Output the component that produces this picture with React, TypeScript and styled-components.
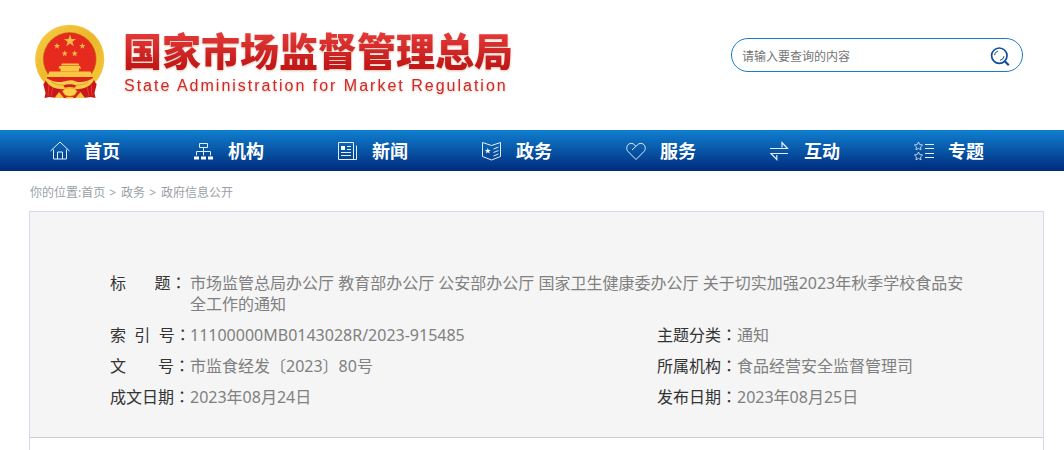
import React from 'react';
import styled, { createGlobalStyle } from 'styled-components';

const GlobalStyle = createGlobalStyle`
  * { box-sizing: border-box; }
  body {
    margin: 0;
    background: #fff;
    font-family: "Noto Sans", "Noto Sans CJK SC", sans-serif;
  }
  a { color: inherit; text-decoration: none; }
`;

const Page = styled.div`
  display: flex;
  flex-direction: column;
  min-height: 100vh;
`;

const Header = styled.header`
  display: flex;
  justify-content: space-between;
  align-items: flex-start;
  height: 130px;
  padding: 24px 41px 0 35px;
`;

const Brand = styled.a`
  display: flex;
  gap: 18px;
`;

const BrandText = styled.div`
  display: flex;
  flex-direction: column;
  gap: 5px;
  padding-top: 4px;
  white-space: nowrap;
  filter: drop-shadow(0 1px 1px rgba(170, 120, 80, 0.45));
`;

const BrandName = styled.h1`
  margin: 0;
  font-family: "Noto Sans CJK SC", sans-serif;
  font-size: 39px;
  line-height: 42px;
  font-weight: 900;
  color: transparent;
  background: linear-gradient(#e43a3a 10%, #c41818 90%);
  background-clip: text;
  -webkit-background-clip: text;
`;

const BrandLatin = styled.p`
  margin: 0;
  padding-left: 1px;
  font-family: "Liberation Sans", Arial, sans-serif;
  font-size: 16px;
  line-height: 22px;
  letter-spacing: 2px;
  color: #d22828;
`;

const SearchForm = styled.form`
  display: flex;
  align-items: center;
  width: 292px;
  height: 34px;
  margin-top: 14px;
  padding: 4px 12px 0 10px;
  border: 1px solid #1a7cc6;
  border-radius: 17px;
`;

const SearchInput = styled.input`
  flex: 1;
  min-width: 0;
  padding: 0;
  border: 0;
  outline: 0;
  background: none;
  font-family: inherit;
  font-size: 12px;
  line-height: 20px;
  color: #333;
  &::placeholder { color: #757575; opacity: 1; }
`;

const SearchButton = styled.button`
  display: flex;
  padding: 0;
  border: 0;
  background: none;
  cursor: pointer;
`;

const Nav = styled.nav`
  display: flex;
  height: 41px;
  padding: 1px 43px 0 13px;
  background: linear-gradient(#107fd0, #002b7c);
`;

const NavItem = styled.a`
  display: flex;
  flex: 1;
  align-items: center;
  justify-content: center;
  gap: 14px;
  color: #fff;
  font-size: 18px;
  line-height: 26px;
  font-weight: 700;
  white-space: nowrap;
`;

const Breadcrumb = styled.nav`
  padding: 13px 30px 9px;
  font-size: 12px;
  line-height: 18px;
  color: #9a9fa8;
`;

const Separator = styled.span`
  margin: 0 5px 0 4px;
`;

const Card = styled.main`
  flex: 1;
  margin: 0 20px 0 29px;
  border: 1px solid #d3daea;
  border-bottom: 0;
`;

const Meta = styled.section`
  padding: 56px 70px 24px 80px;
  border-bottom: 1px solid #cfcfcf;
  background: #f5f5f5;
`;

const MetaTable = styled.table`
  width: 100%;
  table-layout: fixed;
  border-collapse: collapse;
  font-size: 16px;
  line-height: 21px;
`;

const Col = styled.col<{ $width?: string }>`
  width: ${(p) => p.$width ?? 'auto'};
`;

const Label = styled.th`
  padding: 5px 0;
  font-weight: 400;
  text-align: left;
  vertical-align: top;
  white-space: pre;
  color: #333;
`;

/* The TC face centres the full-width colon in its box. */
const Colon = styled.span`
  font-family: "Noto Sans CJK TC", sans-serif;
  line-height: 1;
`;

const Value = styled.td`
  padding: 5px 0;
  vertical-align: top;
  color: #808080;
`;

function starPoints(cx: number, cy: number, r: number, inner = 0.4) {
  return Array.from({ length: 10 }, (_, i) => {
    const a = (Math.PI / 5) * i - Math.PI / 2;
    const d = i % 2 ? r * inner : r;
    return `${(cx + d * Math.cos(a)).toFixed(2)},${(cy + d * Math.sin(a)).toFixed(2)}`;
  }).join(' ');
}

const Emblem = () => (
  <svg width="70" height="76" viewBox="0 0 70 76" aria-hidden="true">
    <defs>
      <linearGradient id="gold" x1="0" y1="0" x2="1" y2="1">
        <stop offset="0" stopColor="#f6cf4a" />
        <stop offset="0.5" stopColor="#eeb92c" />
        <stop offset="1" stopColor="#f7cb3a" />
      </linearGradient>
    </defs>
    <circle cx="34.7" cy="35.3" r="34.6" fill="url(#gold)" />
    <circle cx="34.7" cy="35.3" r="30.5" fill="none" stroke="#d99a1c" strokeWidth="4" strokeDasharray="1 2" opacity="0.16" />
    <circle cx="34.7" cy="35" r="26.9" fill="#c98a18" />
    <circle cx="34.7" cy="35" r="26.2" fill="#e62a1e" />
    <g fill="#f3bd45">
      <polygon points={starPoints(35, 17, 6.4)} />
      <polygon points={starPoints(22, 22, 3.3)} />
      <polygon points={starPoints(47.4, 22, 3.3)} />
      <polygon points={starPoints(29.7, 29.6, 3.3)} />
      <polygon points={starPoints(39.7, 29.6, 3.3)} />
    </g>
    <g fill="#f8c842">
      <path d="M27 39.500h16.500l1 2H26zM24.500 42h20.500l1 2.500H23.500zM25.500 44.500h18.500v3H25.500z" />
      <path d="M14.500 47.500h41l2.500 5.500H12z" />
    </g>
    <path d="M12 53h46v6H12z" fill="#dc241c" />
    <path d="M8 60l8 6 6 8h26l6-8 8-6-8-5H16z" fill="#dc241c" />
    <path d="M11.500 55l10 6 4 5-4 8-7-1-5 1 1-5-2-8z" fill="#c8161a" />
    <path d="M58.500 55l-10 6-4 5 4 8 7-1 5 1-1-5 2-8z" fill="#c8161a" />
    <path d="M14 59l-1 13M18 62l-2 10M56 59l1 13M52 62l2 10" stroke="#e8392f" strokeWidth="1" fill="none" />
    <path d="M10.500 53.500c5 3.500 12 5.500 18 4 3.500-1 8-2.500 12.500 0 6 1.500 13-.5 18-4l-.5 3.500c-3 4.500-8 7.500-15 8-6 .5-12 .5-18 0-7-.5-12-3.500-14.500-8z" fill="#f7cc48" />
    <path d="M28 61.500c4-1.800 9.500-1.800 13.500 0l-2 2.300c-3-1-6.500-1-9.500 0z" fill="#d4201c" />
    <path d="M16 57.500c4 3 8 4 12 3.500M53.500 57.500c-4 3-8 4-12 3.500" stroke="#d99a1c" strokeWidth="0.800" fill="none" />
    <path d="M27.500 67.500c1-2.500 4-3.500 7.300-3.500s6.200 1 7.200 3.500l-2.500 3.500c-3 1.500-6.500 1.500-9.500 0z" fill="#f9d24c" stroke="#d6981c" strokeWidth="0.600" />
    <path d="M19.500 74l4.500-6 5 6zM50 74l-4.500-6-5 6z" fill="#f6c63a" />
    <path d="M30 74.500h9.500l-1.500-1.500h-6.500z" fill="#f6c63a" />
  </svg>
);

const SearchIcon = () => (
  <svg width="20" height="20" viewBox="0 0 20 20" fill="none" stroke="#0f4c9c" aria-hidden="true">
    <circle cx="9.300" cy="8.700" r="7.700" strokeWidth="1.700" />
    <path d="M14.500 14l4.300 4.200" strokeWidth="2.200" />
    <path d="M4.500 8.200a4.800 4.800 0 0 1 3.500-4.200M13.900 9.200a4.800 4.800 0 0 1-4 4.200" strokeWidth="1" />
  </svg>
);

const NavIcon = ({ children }: { children: React.ReactNode }) => (
  <svg width="20" height="20" viewBox="0 0 20 20" fill="none" stroke="#e4eefa" strokeWidth="1" aria-hidden="true">
    {children}
  </svg>
);

const NAV = [
  {
    label: '首页',
    icon: <path d="M.5 10L10 1l9.500 9M3.500 8.500v9.500h13V8.500M7.500 18v-7h5v7" />,
  },
  {
    label: '机构',
    icon: (
      <>
        <path d="M5.500 2.500h8v4h-8zM9.500 6.500v8M2.500 14.500v-4h14v4" />
        <path d="M0 15.500h5v3H0zM7 15.500h5v3H7zM14 15.500h5v3h-5z" fill="#fff" stroke="none" />
      </>
    ),
  },
  {
    label: '新闻',
    icon: (
      <>
        <path d="M16 18.500H.5v-17h15v17h3v-14M9 5.500h4M9 8.500h4M3 11.500h10M3 14.500h10" />
        <path d="M3 5h4v4H3z" fill="#fff" stroke="none" />
      </>
    ),
  },
  {
    label: '政务',
    icon: (
      <>
        <path d="M.5 1.500l9 3 9-3v14l-9 3.500-9-3.500zM11.500 8l5-2M11.500 11.500l5-2M11.500 15l5-2" />
        <polygon points={starPoints(5.800, 10, 3.2)} fill="#fff" stroke="none" />
      </>
    ),
  },
  {
    label: '服务',
    icon: (
      <path d="M10 18.500L2 10.500C0 8.300.5 5 2.500 3.300c2-1.600 4.800-1 6.300.8L10 5.300l1.200-1.200c1.500-1.800 4.300-2.400 6.300-.8 2 1.700 2.500 5 .5 7.200zM10 5.300L6 9" />
    ),
  },
  {
    label: '互动',
    icon: <path d="M0 7.500h17.500l-5.500-6v5M18 12.500H.8l6 6v-4.500" strokeWidth="1.200" />,
  },
  {
    label: '专题',
    icon: (
      <>
        <polygon points={starPoints(4.500, 5.300, 4.3, 0.5)} strokeWidth="0.800" />
        <polygon points={starPoints(4.500, 15.300, 4.3, 0.5)} strokeWidth="0.800" />
        <path d="M11 3.500h9M11 7.500h9M11 12.500h9M11 16.500h9" />
      </>
    ),
  },
];

const ROWS = [
  ['索\u00a0\u00a0引\u00a0\u00a0号', '11100000MB0143028R/2023-915485', '主题分类', '通知'],
  ['文\u3000\u3000号', '市监食经发〔2023〕80号', '所属机构', '食品经营安全监督管理司'],
  ['成文日期', '2023年08月24日', '发布日期', '2023年08月25日'],
];

const RowLabel = ({ text }: { text: string }) => (
  <Label scope="row">
    {text}
    <Colon lang="zh-TW">：</Colon>
  </Label>
);

export default function App() {
  return (
    <Page lang="zh-CN">
      <GlobalStyle />
      <Header>
        <Brand href="#">
          <Emblem />
          <BrandText>
            <BrandName>国家市场监督管理总局</BrandName>
            <BrandLatin>State Administration for Market Regulation</BrandLatin>
          </BrandText>
        </Brand>
        <SearchForm role="search">
          <SearchInput type="text" aria-label="查询" placeholder="请输入要查询的内容" />
          <SearchButton type="button" aria-label="搜索">
            <SearchIcon />
          </SearchButton>
        </SearchForm>
      </Header>
      <Nav>
        {NAV.map(({ label, icon }) => (
          <NavItem key={label} href="#">
            <NavIcon>{icon}</NavIcon>
            {label}
          </NavItem>
        ))}
      </Nav>
      <Breadcrumb>
        你的位置:<a href="#">首页</a>
        <Separator>&gt;</Separator>
        <a href="#">政务</a>
        <Separator>&gt;</Separator>
        <a href="#">政府信息公开</a>
      </Breadcrumb>
      <Card>
        <Meta>
          <MetaTable>
            <colgroup>
              <Col $width="80px" />
              <Col />
              <Col $width="80px" />
              <Col $width="236px" />
            </colgroup>
            <tbody>
              <tr>
                <RowLabel text={'标\u3000\u00a0\u00a0\u00a0题'} />
                <Value colSpan={3}>
                  市场监管总局办公厅 教育部办公厅 公安部办公厅 国家卫生健康委办公厅 关于切实加强2023年秋季学校食品安全工作的通知
                </Value>
              </tr>
              {ROWS.map(([l1, v1, l2, v2]) => (
                <tr key={v1}>
                  <RowLabel text={l1} />
                  <Value>{v1}</Value>
                  <RowLabel text={l2} />
                  <Value>{v2}</Value>
                </tr>
              ))}
            </tbody>
          </MetaTable>
        </Meta>
      </Card>
    </Page>
  );
}
